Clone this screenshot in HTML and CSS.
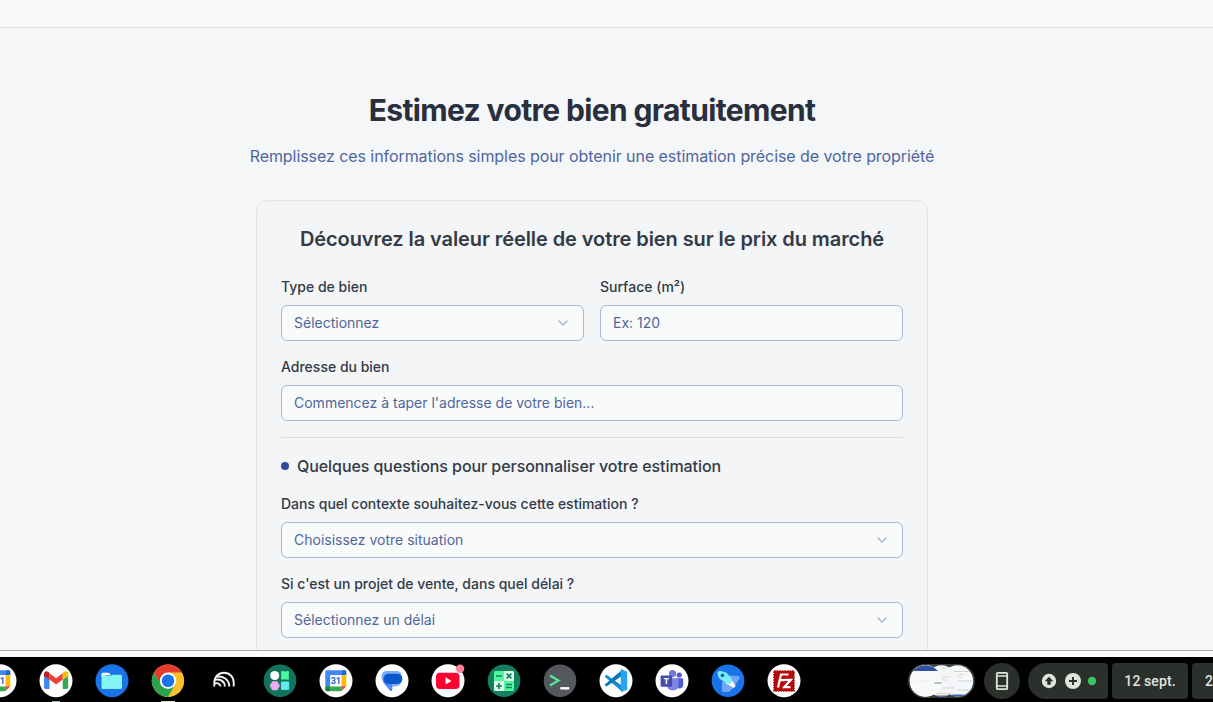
FILE: index.html
```html
<!DOCTYPE html>
<html lang="fr">
<head>
<meta charset="utf-8">
<title>Estimez votre bien gratuitement</title>
<link rel="stylesheet" href="styles.css">
</head>
<body>
<svg class="defs" width="0" height="0">
  <defs>
    <symbol id="calendar" viewBox="0 0 34 34">
      <circle cx="17" cy="16.7" r="16.5" fill="#fff"/>
      <path d="M7.5 6.3h14.8v5H11.5v11H6.3V7.5q0-1.2 1.2-1.2z" fill="#4285f4"/>
      <path d="M22.3 6.3h3.8q1.2 0 1.2 1.2v3.8h-5z" fill="#1967d2"/>
      <path d="M22.3 11.3h5v11h-5z" fill="#fbbc04"/>
      <path d="M11.3 22.3h11v4.9h-11z" fill="#34a853"/>
      <path d="M6.3 22.3h5v4.9H7.5q-1.2 0-1.2-1.2z" fill="#188038"/>
      <path d="M22.3 22.3h5l-5 4.9z" fill="#ea4335"/>
      <path d="M11.3 11.3h11v11h-11z" fill="#fff"/>
      <text x="16.8" y="20" text-anchor="middle" class="cal-day">31</text>
    </symbol>
    <symbol id="chevron" viewBox="0 0 24 24">
      <path d="m6 9 6 6 6-6" fill="none" stroke="#a5b1d0" stroke-width="2" stroke-linecap="round" stroke-linejoin="round"/>
    </symbol>
  </defs>
</svg>
<div class="screen">
  <div class="page">
    <header class="topbar"></header>
    <main class="content">
      <h1 class="title">Estimez votre bien gratuitement</h1>
      <p class="subtitle">Remplissez ces informations simples pour obtenir une estimation précise de votre propriété</p>
      <section class="card">
        <h2 class="card-title">Découvrez la valeur réelle de votre bien sur le prix du marché</h2>
        <div class="row">
          <div class="field"><span class="label">Type de bien</span><div class="control"><span>Sélectionnez</span><svg class="chev"><use href="#chevron"/></svg></div></div>
          <div class="field"><span class="label">Surface (m²)</span><div class="control">Ex: 120</div></div>
        </div>
        <div class="field"><span class="label">Adresse du bien</span><div class="control">Commencez à taper l'adresse de votre bien...</div></div>
        <div class="questions">
          <h3 class="section-title"><span class="dot"></span>Quelques questions pour personnaliser votre estimation</h3>
          <div class="field"><span class="label">Dans quel contexte souhaitez-vous cette estimation ?</span><div class="control"><span>Choisissez votre situation</span><svg class="chev"><use href="#chevron"/></svg></div></div>
          <div class="field"><span class="label">Si c'est un projet de vente, dans quel délai ?</span><div class="control"><span>Sélectionnez un délai</span><svg class="chev"><use href="#chevron"/></svg></div></div>
        </div>
      </section>
    </main>
  </div>
  <div class="window-edge"></div>
  <footer class="shelf">
    <div class="apps">
      <div class="app"><svg viewBox="0 0 34 34"><use href="#calendar"/></svg></div>
      <div class="app running-small"><svg viewBox="0 0 34 34">
        <circle cx="17" cy="16.7" r="16.5" fill="#fff"/>
        <path d="M5 11.5l5.5 4V25H6.7Q5 25 5 23.3z" fill="#4285f4"/>
        <path d="M29.2 11.5l-5.5 4V25h3.8q1.7 0 1.7-1.7z" fill="#34a853"/>
        <path d="M10.5 9.2l6.6 5 6.6-5v6.3l-6.6 5-6.6-5z" fill="#ea4335"/>
        <path d="M5 12V9.8C5 7.2 7.8 6.6 9.5 8l1 .9v6.8z" fill="#c5221f"/>
        <path d="M29.2 12V9.8c0-2.6-2.800-3.200-4.500-1.800l-1 .9v6.800z" fill="#fbbc04"/>
      </svg></div>
      <div class="app"><svg viewBox="0 0 34 34">
        <circle cx="17" cy="16.7" r="16.5" fill="#1a73e8"/>
        <path d="M6.500 10q0-1.200 1.200-1.200h6l2.300 2.300h-4l-5.500 2z" fill="#fff"/>
        <path d="M6.500 12l2-.5h7.500l1.800-.8h8q1.200 0 1.200 1.200V23.500q0 1.500-1.500 1.500H8q-1.500 0-1.500-1.500z" fill="#82f4f4"/>
      </svg></div>
      <div class="app running-wide"><svg viewBox="0 0 34 34">
        <circle cx="17" cy="16.7" r="16.2" fill="#fbc02d"/>
        <path d="M2.970 8.600A16.200 16.200 0 0 1 31.030 8.600H17l-7 12.100z" fill="#e33b2e"/>
        <path d="M2.970 8.600A16.200 16.200 0 0 0 17 32.900l7-12.100-7 4-7-4z" fill="#2da14c"/>
        <circle cx="17" cy="16.7" r="8.1" fill="#fff"/><circle cx="17" cy="16.7" r="6.3" fill="#1a73e8"/>
      </svg></div>
      <div class="app"><svg viewBox="0 0 34 34" fill="none" stroke="#f1f5ef" stroke-width="1.9">
        <path d="M7.300 22.500v-4c0-5.500 4-9.700 9.700-9.700s9.700 4.200 9.700 9.700v4"/>
        <path d="M9.500 12.700c6.500-1 12.700 2.500 12.700 9.800"/>
        <path d="M7.500 15.800c5.500-1.300 10.300 1.300 10.300 6.700M7.500 19.500c3.200-1 5.700.2 6 3"/>
      </svg></div>
      <div class="app"><svg viewBox="0 0 34 34">
        <circle cx="17" cy="16.7" r="16.3" fill="#14745b"/>
        <circle cx="11.700" cy="11.500" r="4.500" fill="#fff"/>
        <path d="M19.500 7q2.500.8 5 0 1.500-.3 1.500 1.200-.8 3 0 6 .2 1.700-1.500 1.500-2.500-.8-5 0-1.700.2-1.500-1.500.8-3 0-6Q18 6.700 19.500 7z" fill="#4bfa9e"/>
        <path d="M9.500 17.800h4.600l2.300 4-2.300 4H9.500l-2.300-4z" fill="#f2aaf2" stroke="#f2aaf2" stroke-linejoin="round"/>
        <rect x="18" y="17.500" width="8.200" height="8.500" rx="1.300" fill="#5beaf0"/>
      </svg></div>
      <div class="app"><svg viewBox="0 0 34 34"><use href="#calendar"/></svg></div>
      <div class="app"><svg viewBox="0 0 34 34">
        <circle cx="17" cy="16.7" r="16.5" fill="#fff"/>
        <path d="M12 7h9.500q4.500 0 5 4v4.500q0 7-7 7h-2.300V26q0 2-2 .8l-4-4.600Q6.500 18 6.500 12.500 6.500 7 12 7z" fill="#7cacf8"/>
        <path d="M8.500 15h8.700v11q-.5 1.700-2 .8L12 22.500Q8.500 20 8.500 15z" fill="#4d8bf5"/>
        <rect x="8.500" y="9.700" width="18.800" height="10.200" rx="5" fill="#0b57d0"/>
      </svg></div>
      <div class="app"><svg viewBox="0 0 34 34">
        <circle cx="17" cy="16.7" r="16.5" fill="#fff"/>
        <rect x="5" y="8.700" width="23.500" height="16.300" rx="4" fill="#ff0033"/>
        <path d="M14.500 13.300v7.200l6-3.600z" fill="#fff"/><circle cx="29.100" cy="4.800" r="4.200" fill="#ff8096"/>
      </svg></div>
      <div class="app"><svg viewBox="0 0 34 34">
        <circle cx="17" cy="16.7" r="16.3" fill="#14805f"/>
        <rect x="7" y="7" width="20" height="20" rx="1.500" fill="#4df99c"/>
        <path d="M17 7h8.500q1.500 0 1.500 1.500V17H17zM7 17h10v10H8.500Q7 27 7 25.500z" fill="#d9fbe8"/>
        <path d="M9 12h6M19.600 9.600l4.800 4.800m0-4.800l-4.800 4.800M9 22h6m-3-3v6m7-4.500h6m-6 3h6" stroke="#14805f" stroke-width="1.700"/>
      </svg></div>
      <div class="app"><svg viewBox="0 0 34 34">
        <circle cx="17" cy="16.7" r="16.3" fill="#54585e"/>
        <path d="M7 11.500l8.300 5-8.300 5" fill="none" stroke="#4ee69c" stroke-width="2.500"/><path d="M17.300 24.300h9" stroke="#fff" stroke-width="2.400"/>
      </svg></div>
      <div class="app"><svg viewBox="0 0 34 34">
        <circle cx="17" cy="16.7" r="16.5" fill="#fff"/>
        <path d="M5.500 12.500l2-1.800L23.500 22v6z" fill="#168bd2"/>
        <path d="M5.500 20.700l2 1.800L23.500 11.500v-6z" fill="#0877b9"/>
        <path d="M22.500 5.200l5.700 2.500v18l-5.700 2.400-.7-1V6.100z" fill="#25a5ed"/>
      </svg></div>
      <div class="app"><svg viewBox="0 0 34 34">
        <circle cx="17" cy="16.7" r="16.5" fill="#fff"/>
        <circle cx="17.500" cy="9.700" r="3.600" fill="#7079dc"/><circle cx="24.200" cy="11" r="2.600" fill="#5059c9"/>
        <path d="M21 14.300h6q1.200 0 1.200 1.200V20q0 4.500-4.200 4.500-3 0-3-4z" fill="#5059c9"/>
        <path d="M12 14.300h10.500q1.200 0 1.200 1.200V20q0 6.500-6 6.500T12 20z" fill="#7b83eb"/>
        <rect x="5.600" y="11.500" width="11.500" height="11.300" rx="1" fill="#454caa"/>
        <text x="11.300" y="20.300" text-anchor="middle" class="teams-t">T</text>
      </svg></div>
      <div class="app"><svg viewBox="0 0 34 34">
        <circle cx="17" cy="16.7" r="16.3" fill="#1a73e8"/>
        <path d="M19 11.500l8.500.5q1.700.6 1 2.500l-6 9.500-4.500 4h-5.500q-1.500-.3-1.500-1.700v-8z" fill="#71a7f7"/>
        <path d="M19.500 14l4.800 7.500q.2 2.200-2 2.200L14.500 19z" fill="#fff"/>
        <path d="M6.500 9q-.2-2 1.800-2 5.700.2 8.700 3.200l4 5.300q.5 3.500-3 4.800l-6-3.300Q6.700 14.200 6.500 9z" fill="#79eff5"/>
        <circle cx="11.500" cy="11.300" r="1.900" fill="#1765ba"/>
      </svg></div>
      <div class="app"><svg viewBox="0 0 34 34">
        <circle cx="17" cy="16.7" r="16.5" fill="#fff"/>
        <rect x="7" y="7" width="20" height="20" fill="#b80808" stroke="#a40808" stroke-width="1.600" stroke-dasharray="1.600 1"/>
        <path d="M11 23.500l3-13h7.500M12.700 16.200h5.500M17.800 15.800h6l-6.600 7.400h6.300" fill="none" stroke="#fff" stroke-width="2.200"/>
      </svg></div>
    </div>
    <div class="tray">
      <svg class="previews" viewBox="0 0 67 36">
        <rect y="1" width="67" height="34" rx="17" fill="#3a3e3b"/>
        <g><circle cx="49.500" cy="18" r="15.700" fill="#f7f8fa"/><path d="M46 8.500h16M50 18h15M49 27h13" stroke="#bcc5d8" stroke-width=".8"/><path d="M50 11.500h6M49 14h5" stroke="#ccc" stroke-width=".7"/><path d="M41.500 31.500a15.700 15.700 0 0 0 16 0z" fill="#4262ab"/></g>
        <g><circle cx="33.500" cy="18" r="15.700" fill="#f4f5f7"/><path d="M34 5h6M33 14h8M33 17h6M34 25h13" stroke="#ccd1da" stroke-width=".8"/><path d="M28 30.500h14" stroke="#efc9c9" stroke-width="1.400"/><path d="M27 32.500a15.700 15.700 0 0 0 13 0z" fill="#4262ab"/></g>
        <circle cx="17.500" cy="18" r="15.900" fill="#f8fafa"/><path d="M5.200 8A15.900 15.900 0 0 1 29.800 8z" fill="#354f9f"/>
        <path d="M6 18h14" stroke="#e8e9e9" stroke-width=".7"/><path d="M26.500 20h7" stroke="#8b94a5" stroke-width="1.200"/>
      </svg>
      <div class="phone"><svg viewBox="0 0 36 36"><rect x="12.800" y="9.800" width="10.400" height="16.400" rx="1" fill="none" stroke="#dfe4dc" stroke-width="1.800"/><path d="M13 13h10M13 23h10" stroke="#dfe4dc" stroke-width="1.600"/></svg></div>
      <div class="status"><svg viewBox="0 0 80 36">
        <circle cx="21" cy="18" r="7.200" fill="#dfe4dc"/><path d="M21 13.700l4.300 4.500h-2.600v3.600h-3.400v-3.600h-2.600z" fill="#2c302d"/>
        <circle cx="45" cy="18" r="8" fill="#dfe4dc"/><path d="M45 14v8m-4-4h8" stroke="#2c302d" stroke-width="1.900"/>
        <circle cx="64" cy="18" r="4.200" fill="#38c45e"/>
      </svg></div>
      <div class="date">12 sept.</div>
      <div class="time">2</div>
    </div>
  </footer>
</div>
</body>
</html>
```

FILE: styles.css
```css
* { box-sizing: border-box; }
body { margin: 0; font-family: Inter, sans-serif; overflow: hidden; }
h1, h2, h3, p { margin: 0; }
.defs { display: block; height: 0; }
.screen { width: 1213px; height: 702px; display: flex; flex-direction: column; overflow: hidden; background: #fff; }
.page { height: 650px; flex: none; overflow: hidden; background: #f4f6f8; }
.topbar { height: 28px; background: #f9fbfa; border-bottom: 1px solid #dde0e4; }
.content { width: 1184px; padding-top: 64px; display: flex; flex-direction: column; align-items: center; }
.title { font-size: 30px; line-height: 37px; font-weight: 700; letter-spacing: -0.64px; color: #292f3d; }
.subtitle { margin-top: 15px; font-size: 16px; line-height: 24px; letter-spacing: -0.067px; color: #4f669d; }
.card { width: 672px; height: 560px; margin-top: 32px; padding: 24px; display: flex; flex-direction: column; gap: 16px; background: #f3f5f7; border: 1px solid #e1e4e9; border-radius: 12px; box-shadow: 0 1px 2px rgba(0, 0, 0, .03); }
.card-title { height: 36px; font-size: 20px; line-height: 28px; font-weight: 600; letter-spacing: -0.08px; text-align: center; color: #343a46; }
.row { display: grid; grid-template-columns: 1fr 1fr; gap: 16px; }
.field { display: flex; flex-direction: column; gap: 8px; }
.label { height: 20px; font-size: 14px; line-height: 20px; font-weight: 500; color: #343a46; }
.control { height: 36px; padding: 0 12px; display: flex; align-items: center; justify-content: space-between; font-size: 14px; line-height: 20px; color: #4f669d; background: #f9fbfa; border: 1px solid #a8b7da; border-radius: 6px; }
.chev { width: 16px; height: 16px; }
.questions { border-top: 1px solid #d9dde2; padding-top: 16px; display: flex; flex-direction: column; gap: 16px; }
.section-title { display: flex; align-items: center; gap: 8px; font-size: 16px; line-height: 24px; font-weight: 500; letter-spacing: -0.067px; color: #343a46; }
.dot { width: 8px; height: 8px; border-radius: 50%; background: #304998; }
.window-edge { height: 7px; flex: none; border-top: 1px solid #a9a9ac; background: #fcfcfd; }
.shelf { height: 45px; flex: none; background: #000; display: flex; justify-content: space-between; }
.apps { display: flex; gap: 22px; padding-top: 7px; margin-left: -17.4px; }
.app { width: 34px; height: 38px; flex: none; display: flex; flex-direction: column; align-items: center; justify-content: space-between; }
.app svg { width: 34px; height: 34px; display: block; flex: none; }
.running-small::after, .running-wide::after { content: ""; height: 1px; width: 8px; background: #a9bdb0; }
.running-wide::after { width: 14px; background: #dddddb; }
.cal-day { font: 700 9px Roboto, sans-serif; fill: #1967d2; }
.teams-t { font: 700 9px "Open Sans", sans-serif; fill: #fff; }
.tray { width: 305px; flex: none; padding-top: 6px; display: flex; align-items: flex-start; color: #dfe4dc; font: 500 14px/36px Roboto, sans-serif; letter-spacing: .1px; }
.previews { width: 67px; height: 36px; margin-right: 9px; flex: none; }
.phone, .status, .date, .time { height: 36px; flex: none; background: #2c302d; }
.phone { width: 36px; border-radius: 50%; margin-right: 8px; }
.status { width: 80px; border-radius: 18px 4px 4px 18px; margin-right: 4px; }
.phone svg, .status svg { display: block; width: 100%; height: 100%; }
.date { width: 76px; text-align: center; border-radius: 4px; margin-right: 4px; }
.time { width: 21px; padding-left: 13px; border-radius: 4px 0 0 4px; }
```
